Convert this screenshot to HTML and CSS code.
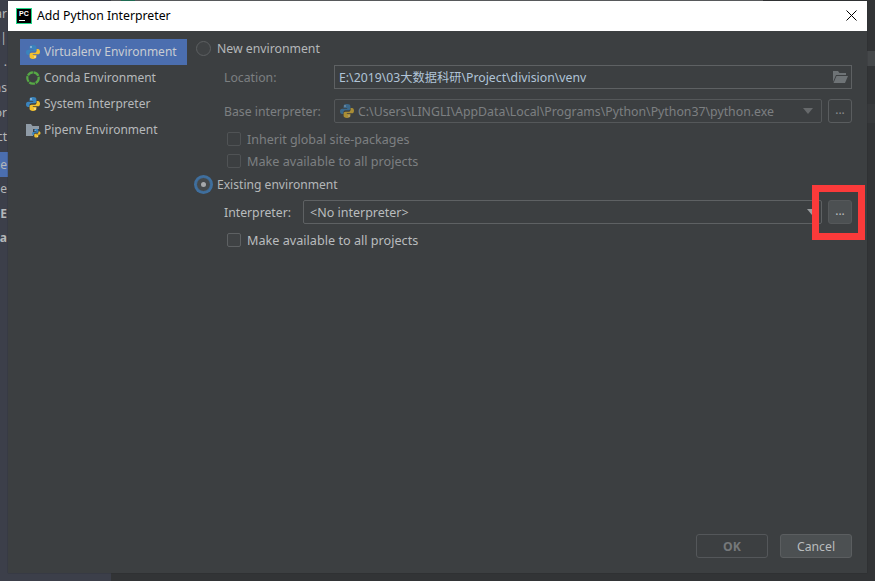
FILE: index.html
```html
<!DOCTYPE html>
<html lang="en">
<head>
<meta charset="utf-8">
<title>Add Python Interpreter</title>
<link rel="stylesheet" href="styles.css">
</head>
<body>
<svg class="defs" width="0" height="0" aria-hidden="true">
  <symbol id="py" viewBox="0 0 16 16">
    <path fill="#3a84bd" d="M8 1C5.600 1 4.600 1.900 4.600 3.200V5h3.600v.7H3.100C1.800 5.700 1 6.700 1 8.300c0 1.700.8 2.800 2 2.800h1.400V9.300c0-1.200 1-2.100 2.200-2.100h3c1 0 1.800-.8 1.800-1.800V3.200C11.400 1.900 10.200 1 8 1z"/>
    <circle cx="6" cy="3" r=".7" fill="#fff"/>
    <path fill="#f2c12e" d="M8 15c2.400 0 3.400-.9 3.400-2.200V11H7.800v-.7h5.100c1.300 0 2.100-1 2.100-2.600 0-1.700-.8-2.800-2-2.800h-1.400v1.800c0 1.200-1 2.100-2.200 2.100h-3c-1 0-1.800.8-1.800 1.800v2.200C4.600 14.100 5.800 15 8 15z"/>
    <circle cx="10" cy="13" r=".7" fill="#fff"/>
  </symbol>
</svg>
<div class="desktop">
  <div class="backdrop">
    <div class="back-side">
      <span class="back-row r1">ar</span>
      <span class="back-row r2">a|</span>
      <span class="back-row r3">.</span>
      <span class="back-row r4">ns</span>
      <span class="back-row r5">or</span>
      <span class="back-row r6">ct</span>
      <span class="back-row r7 sel">je</span>
      <span class="back-row r8">je</span>
      <span class="back-row r9">E</span>
      <span class="back-row r10">ua</span>
    </div>
    <div class="back-main">
      <div class="tabstrip"><span class="tabmark"></span></div>
      <div class="band band1"></div>
      <div class="band band2"></div>
    </div>
  </div>

  <section class="dialog">
    <header class="titlebar">
      <span class="pc-logo"><b>PC</b><i></i></span>
      <h1 class="title">Add Python Interpreter</h1>
      <svg class="close" width="11" height="11" viewBox="0 0 11 11"><path d="M.5.500l10 10M10.500.500l-10 10" stroke="#000" stroke-width="1" fill="none"/></svg>
    </header>
    <div class="body">
      <nav class="types">
        <div class="type active">
          <svg class="ico" width="16" height="16"><use href="#py"/></svg>
          <span>Virtualenv Environment</span>
        </div>
        <div class="type">
          <svg class="ico" width="16" height="16" viewBox="0 0 16 16"><circle cx="8" cy="8" r="5.700" fill="none" stroke="#56a845" stroke-width="2.200" stroke-dasharray="6 .7"/></svg>
          <span>Conda Environment</span>
        </div>
        <div class="type">
          <svg class="ico" width="16" height="16"><use href="#py"/></svg>
          <span>System Interpreter</span>
        </div>
        <div class="type">
          <svg class="ico" width="16" height="16" viewBox="0 0 16 16"><path fill="#8f9ba6" d="M1 2h5l1.500 2H14v3H8v7H1z"/><g transform="translate(6.500 6.500) scale(.6)"><use href="#py" width="16" height="16"/></g></svg>
          <span>Pipenv Environment</span>
        </div>
      </nav>

      <div class="panel">
        <label class="radio-row">
          <span class="radio"></span>
          <span>New environment</span>
        </label>
        <div class="field-row first off">
          <span class="lbl">Location:</span>
          <div class="input location">
            <span class="strong">E:\2019\03大数据科研\Project\division\venv</span>
            <svg class="folder" width="16" height="14" viewBox="0 0 16 14"><path fill="#6e7376" d="M1 1h5l1.500 2H14v2H4L1 12z"/><path fill="#6e7376" d="M4.500 6H16l-3 7H1.500z"/></svg>
          </div>
        </div>
        <div class="field-row second off">
          <span class="lbl">Base interpreter:</span>
          <div class="input combo base">
            <svg class="ico dim" width="16" height="16"><use href="#py"/></svg>
            <span>C:\Users\LINGLI\AppData\Local\Programs\Python\Python37\python.exe</span>
            <span class="caret dimcaret"></span>
          </div>
          <button class="dots" type="button">...</button>
        </div>
        <div class="check-row c1 off"><span class="check"></span><span>Inherit global site-packages</span></div>
        <div class="check-row c2 off"><span class="check"></span><span>Make available to all projects</span></div>
        <label class="radio-row existing">
          <span class="radio on"></span>
          <span>Existing environment</span>
        </label>
        <div class="field-row third">
          <span class="lbl">Interpreter:</span>
          <div class="input combo interp">
            <span>&lt;No interpreter&gt;</span>
            <span class="caret"></span>
          </div>
          <button class="dots raised" type="button">...</button>
        </div>
        <div class="check-row c3"><span class="check"></span><span>Make available to all projects</span></div>
      </div>
    </div>
    <footer class="footer">
      <button class="btn disabled" type="button">OK</button>
      <button class="btn" type="button">Cancel</button>
    </footer>
    <div class="highlight"></div>
  </section>
</div>
</body>
</html>
```
FILE: styles.css
```css
* { box-sizing: border-box; }
html, body { margin: 0; height: 100%; }
body { background: #33363a; font-family: "Noto Sans", "Noto Sans CJK SC", sans-serif; font-size: 12.250px; color: #b9bcbe; overflow: hidden; }
.defs { position: absolute; }
.desktop { position: relative; width: 875px; height: 581px; overflow: hidden; }
.backdrop { display: flex; height: 100%; }
.back-side { position: relative; width: 111px; background: #3c3f4a; }
.back-main { flex: 1; background: #323436; display: flex; flex-direction: column; }
.tabstrip { height: 1px; width: 652px; background: #626466; padding-left: 10px; flex: none; }
.tabmark { display: block; width: 14px; height: 1px; background: #1f7a5c; }
.band { flex: none; }
.band1 { height: 15px; margin-top: 50px; background: #45484a; }
.band2 { height: 19px; margin-top: 38px; background: #37393b; }
.back-row { position: absolute; left: 0; width: 8px; padding-right: 1px; display: flex; justify-content: flex-end; overflow: hidden; white-space: nowrap; font-size: 12px; line-height: 16px; color: #b4b7ba; }
.r1 { top: 6px; } .r2 { top: 30px; } .r3 { top: 54px; } .r4 { top: 80px; } .r5 { top: 105px; } .r6 { top: 129px; }
.r7 { top: 152px; height: 25px; padding-top: 5px; background: #4b6eaf; }
.r8 { top: 181px; } .r9 { top: 206px; font-weight: 700; } .r10 { top: 230px; font-weight: 700; }

.dialog { position: absolute; left: 8px; top: 1px; width: 859px; height: 572px; background: #3c3f41; display: flex; flex-direction: column; box-shadow: 0 0 1px #26282a; }
.titlebar { flex: none; height: 30px; background: #fff; display: flex; align-items: center; padding: 0 10px 0 8px; color: #000; }
.pc-logo { width: 16px; height: 16px; background: #000; border: 1px solid #21d789; display: flex; flex-direction: column; padding: 1px 0 0 2px; }
.pc-logo b { font: 700 7px/8px "Liberation Sans", sans-serif; color: #fff; }
.pc-logo i { width: 6px; height: 1px; background: #fff; margin-top: 2px; }
.title { margin: 0 0 2px 5px; font-size: 12.250px; font-weight: 400; flex: 1; }
.close { margin-bottom: 1px; }

.body { flex: 1; display: flex; min-height: 0; padding: 7px 15px 0 12px; }
.types { width: 167px; flex: none; display: flex; flex-direction: column; margin-top: 1px; }
.type { height: 26px; display: flex; align-items: center; gap: 3px; padding-left: 5px; padding-bottom: 1px; font-size: 12px; color: #b6b9bb; }
.type.active { background: #4b6eaf; color: #c8ccd2; }
.ico { flex: none; }
.panel { flex: 1; padding-left: 9px; min-width: 0; display: flex; flex-direction: column; }

.radio-row { display: flex; align-items: center; gap: 6px; height: 20px; color: #b4b7b9; }
.radio { width: 15px; height: 15px; border-radius: 50%; background: #3f4244; border: 1px solid #5d6062; flex: none; position: relative; }
.radio.on { background: #45494b; border-color: #3f6f9e; box-shadow: 0 0 0 2px #3f6f9e; }
.radio.on::after { content: ""; position: absolute; left: 4px; top: 4px; width: 5px; height: 5px; border-radius: 50%; background: #a7a9ab; }
.off { color: #7c7f81; }
.field-row { display: flex; align-items: center; padding-left: 28px; height: 24px; }
.first { margin-top: 7px; }
.second { margin-top: 10px; }
.third { margin-top: 6px; }
.lbl { flex: none; }
.strong { color: #b0c4d8; }
.input { height: 24px; border: 1px solid #5e6163; background: #3c3f41; display: flex; align-items: center; padding: 0 4px; color: #b9bcbe; min-width: 0; }
.location { margin-left: auto; width: 518px; justify-content: space-between; padding-right: 3px; }
.combo { border-radius: 2px; }
.base { margin-left: auto; width: 488px; gap: 3px; font-size: 12.300px; color: #7c7f81; border-color: #55585a; }
.interp { margin-left: auto; width: 519px; padding-left: 6px; font-size: 12.500px; justify-content: space-between; color: #b9bcbe; }
.caret { width: 0; height: 0; border-left: 5px solid transparent; border-right: 5px solid transparent; border-top: 6px solid #9a9d9f; margin-left: auto; }
.dimcaret { border-top-color: #66696b; margin-right: 4px; }
.ico.dim { opacity: .6; }
.dots { width: 24px; height: 24px; margin-left: 6px; flex: none; padding: 0 0 3px; font: 12px "Noto Sans", sans-serif; border-radius: 3px; background: transparent; border: 1px solid #5a5d5f; color: #8a8d8f; }
.raised { background: #4c5052; color: #b9bcbe; border-color: #55585a; }
.check-row { display: flex; align-items: center; gap: 6px; padding-left: 31px; height: 20px; font-size: 12.650px; }
.c1 { margin-top: 6px; font-size: 12.500px; }
.c2 { margin-top: 2px; }
.c3 { margin-top: 6px; }
.check { width: 14px; height: 14px; border: 1px solid #5e6163; border-radius: 2px; background: #3f4244; flex: none; }
.off .check { border-color: #505355; background: #3c3f41; }
.existing { margin-top: 3px; font-size: 12.100px; }

.footer { flex: none; display: flex; justify-content: flex-end; gap: 12px; padding: 0 15px 15px; }
.btn { width: 72px; height: 24px; border-radius: 3px; border: 1px solid #5b5e60; background: #4c5052; color: #b9bcbe; font: 12.250px "Noto Sans", sans-serif; padding: 0; }
.btn.disabled { background: transparent; border-color: #54575a; color: #75787a; font-weight: 700; }
.highlight { position: absolute; left: 804px; top: 184px; width: 53px; height: 55px; border: 7px solid #fb3a3a; pointer-events: none; }
```
